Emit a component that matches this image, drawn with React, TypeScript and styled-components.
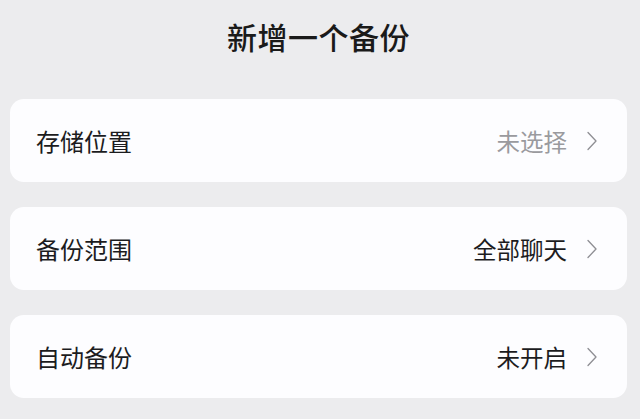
import styled, { createGlobalStyle } from "styled-components";

const GlobalStyle = createGlobalStyle`
  html, body {
    margin: 0;
    padding: 0;
    background: #ececee;
  }
  body {
    font-family: "Noto Sans CJK SC", "Noto Sans", sans-serif;
  }
`;

type Row = { label: string; value: string; muted?: boolean };

const rows: Row[] = [
  { label: "存储位置", value: "未选择", muted: true },
  { label: "备份范围", value: "全部聊天" },
  { label: "自动备份", value: "未开启" },
];

const Chevron = () => (
  <svg width="10" height="20" viewBox="0 0 10 20" fill="none">
    <path
      d="M1 1.5 L9 10 L1 18.5"
      stroke="#8e8e93"
      strokeWidth="1.3"
      strokeLinecap="round"
      strokeLinejoin="round"
    />
  </svg>
);

const App = () => {
  return (
    <Page>
      <GlobalStyle />
      <Header>
        <Title>新增一个备份</Title>
      </Header>
      <List>
        {rows.map((row) => (
          <Card key={row.label}>
            <Label>{row.label}</Label>
            <Right>
              <Value $muted={row.muted}>{row.value}</Value>
              <Chevron />
            </Right>
          </Card>
        ))}
      </List>
    </Page>
  );
};

export default App;

const Page = styled.div`
  width: 640px;
  height: 419px;
  box-sizing: border-box;
  padding: 0 13px 0 10px;
  background: #ececee;
  overflow: hidden;
`;

const Header = styled.div`
  height: 72px;
  display: flex;
  align-items: center;
  justify-content: center;
`;

const Title = styled.h1`
  margin: 0;
  font-size: 30px;
  font-weight: 500;
  color: #1a1a1a;
  letter-spacing: 0.5px;
`;

const List = styled.div`
  margin-top: 27px;
  display: grid;
  gap: 25px;
`;

const Card = styled.div`
  height: 83px;
  background: #fdfdff;
  border-radius: 14px;
  display: flex;
  align-items: center;
  justify-content: space-between;
  padding: 0 30px 0 26px;
`;

const Label = styled.span`
  font-size: 24px;
  color: #1c1c1e;
`;

const Right = styled.div`
  display: flex;
  align-items: center;
  gap: 20px;
`;

const Value = styled.span<{ $muted?: boolean }>`
  font-size: 23.5px;
  color: ${(p) => (p.$muted ? "#9a9a9e" : "#1c1c1e")};
`;
